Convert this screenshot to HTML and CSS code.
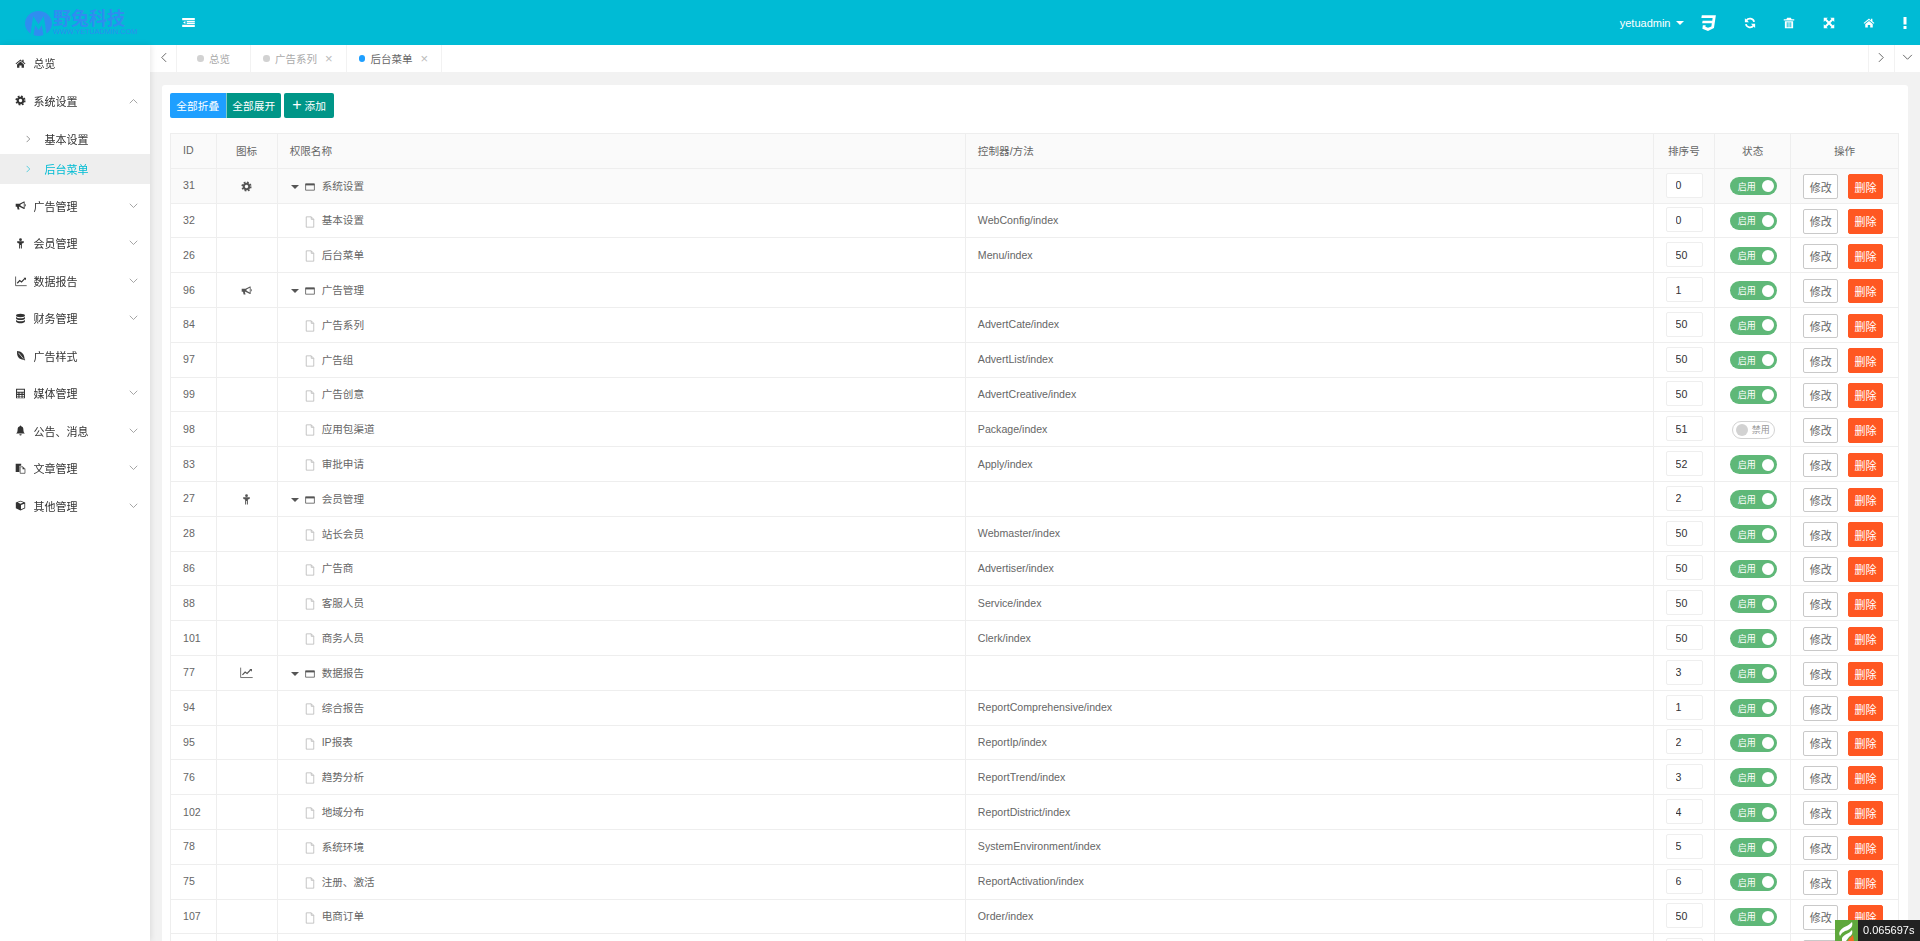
FILE: index.html
```html
<!DOCTYPE html>
<html lang="zh-CN">
<head>
<meta charset="utf-8">
<title>后台菜单</title>
<link rel="stylesheet" href="styles.css">
</head>
<body>
<svg class="sprite" aria-hidden="true">
  <symbol id="i-home" viewBox="0 0 16 16"><path d="M8 2 .8 8l.9 1.1L8 3.9l6.3 5.2.9-1.1-2.7-2.2V2.4h-2v2.2z"/><path d="M3 9.4 8 5.2l5 4.2V14H9.6v-3.2H6.4V14H3z"/></symbol>
  <symbol id="i-gear" viewBox="0 0 16 16"><circle cx="8" cy="8" r="4" fill="none" stroke="currentColor" stroke-width="3"/><circle cx="8" cy="8" r="6.2" fill="none" stroke="currentColor" stroke-width="2.4" stroke-dasharray="2.6 2.27"/></symbol>
  <symbol id="i-horn" viewBox="0 0 16 16"><path fill-rule="evenodd" d="M1 5.5h5.5L13 2h1v11h-1L6.5 9.7H5.6l1 4H3.800l-.9-4H1zM12.800 3.900 8 6.400v2l4.800 2.600z"/><path d="M14.600 6h1v3h-1z"/></symbol>
  <symbol id="i-male" viewBox="0 0 16 16"><circle cx="8" cy="2.400" r="2"/><path d="M3 4.800h10l-.5 2.400-2.500.7V15.200H8.600v-5H7.400v5H6V7.900l-2.500-.7z"/></symbol>
  <symbol id="i-chart" viewBox="0 0 16 16"><path d="M.8 2v12.200H15.600" fill="none" stroke="currentColor"/><path d="M3 11l3.300-3.600 2.400 1.800 4.600-4.700" fill="none" stroke="currentColor" stroke-width="1.500"/><path d="M11.500 3.800h3.200v3.200z"/></symbol>
  <symbol id="i-db" viewBox="0 0 16 16"><ellipse cx="8" cy="3.500" rx="6.500" ry="2.500"/><path d="M1.500 5.300c1 1.500 3.500 2.200 6.500 2.200s5.500-.7 6.500-2.200v2.700C14 9.500 11 10.200 8 10.200S2 9.500 1.500 8z"/><path d="M1.500 9.700c1 1.500 3.500 2.200 6.500 2.200s5.500-.7 6.500-2.200v2.700C14 14 11 15 8 15s-6-1-6.500-2.600z"/></symbol>
  <symbol id="i-leaf" viewBox="0 0 16 16"><path d="M3 1.500C9 1.500 14 6 14 13.500l1 1-.8.8-1.200-1.200C7 14.500 2 10 3 1.500z"/><path d="M5 4l7 8.500" stroke="#fff" fill="none"/></symbol>
  <symbol id="i-calc" viewBox="0 0 16 16"><path fill-rule="evenodd" d="M1.500 1h13v14h-13zM3 2.500v3h10v-3zM3 7v1.500h2V7zm3.500 0v1.500h3V7zM11 7v1.500h2V7zM3 10v1.500h2V10zm3.500 0v1.500h3V10zM11 10v1.500h2V10zM3 12.500V14h2v-1.500zm3.500 0V14h3v-1.500zm4.500 0V14h2v-1.500z"/></symbol>
  <symbol id="i-bell" viewBox="0 0 16 16"><path d="M8 .8c.6 0 1 .4 1 1 2 .4 3.200 2.200 3.200 4.700 0 3.500 1 4.700 2.300 6H1.500c1.300-1.300 2.300-2.500 2.300-6C3.800 4 5 2.200 7 1.800c0-.6.400-1 1-1z"/><path d="M6.300 13.500h3.400A1.700 1.700 0 0 1 6.300 13.500z"/></symbol>
  <symbol id="i-files" viewBox="0 0 16 16"><path d="M1 1h8v3H6.500v9H1z"/><path d="M7.500 5.500h4l3 3V15h-7z" fill="#fff" stroke="currentColor"/><path d="M11 5.500V9h3.500z"/></symbol>
  <symbol id="i-cube" viewBox="0 0 16 16"><path d="M8 1l6.800 2.800v8.200L8 15.200 1.200 12V3.800z"/><path d="M8.700 7.400 13.600 5.300v6l-4.900 2.300zM4 3.700 8 2.100l4 1.600-4 1.700z" fill="#fff"/></symbol>
  <symbol id="i-page" viewBox="0 0 12 14"><path d="M1.500.800h6l3 3v9.400h-9z M7.500.800v3h3" fill="none" stroke="currentColor" stroke-linejoin="round"/></symbol>
  <symbol id="i-win" viewBox="0 0 12 10"><path d="M.500 1h11v8H.500z" fill="none" stroke="currentColor"/><path d="M.500 1h11v2h-11z"/></symbol>
  <symbol id="i-down" viewBox="0 0 12 8"><path d="M1 1l5 5 5-5" fill="none" stroke="currentColor"/></symbol>
  <symbol id="i-up" viewBox="0 0 12 8"><path d="M1 7l5-5 5 5" fill="none" stroke="currentColor"/></symbol>
  <symbol id="i-right" viewBox="0 0 8 12"><path d="M1 1l5 5-5 5" fill="none" stroke="currentColor"/></symbol>
  <symbol id="i-left" viewBox="0 0 8 12"><path d="M7 1 2 6l5 5" fill="none" stroke="currentColor"/></symbol>
  <symbol id="i-indent" viewBox="0 0 14 10"><path d="M0 0h14v2.600H0zM5 3.300h9v1.400H5zM5 5.400h9v1.400H5zM0 7.500h14V10H0z"/><path d="M3.500 3.300v3.500L1 5z"/></symbol>
  <symbol id="i-css" viewBox="0 0 16 16"><path d="M2.500 1H15l-1.700 11.500L8 15l-5-2 .4-3h2.500l-.2 1.300L8 12.200l3-1 .4-3H2.800l.4-2.300h8.600l.3-2.300H2.100z"/></symbol>
  <symbol id="i-refresh" viewBox="0 0 16 16"><path d="M13.500 6.500A5.800 5.800 0 0 0 3.200 4.600" fill="none" stroke="currentColor" stroke-width="2.400"/><path d="M1.200 1.500v5.500h5.500z"/><path d="M2.500 9.500a5.800 5.800 0 0 0 10.300 1.900" fill="none" stroke="currentColor" stroke-width="2.400"/><path d="M14.800 14.500V9H9.300z"/></symbol>
  <symbol id="i-trash" viewBox="0 0 16 16"><path d="M5.500 1h5l1 2H15v1.500H1V3h3.500z"/><path fill-rule="evenodd" d="M2.500 5.500h11V15h-11zM5 7v6.500h1.200V7zm2.400 0v6.500h1.200V7zm2.400 0v6.500H11V7z"/></symbol>
  <symbol id="i-expand" viewBox="0 0 16 16"><path d="M1 1h5.500L4.700 2.800 8 6.100l3.300-3.300L9.500 1H15v5.500l-1.800-1.800L9.900 8l3.300 3.300 1.800-1.800V15H9.500l1.800-1.800L8 9.900l-3.300 3.300L6.500 15H1V9.500l1.800 1.800L6.100 8 2.800 4.700 1 6.500z"/></symbol>
  <symbol id="i-more" viewBox="0 0 4 12"><path d="M.500 0h3v7.500h-3zM.500 9h3v3h-3z"/></symbol>
</svg>

<div class="app">
  <header class="topbar">
    <a class="logo">
      <svg class="logo-mark" viewBox="0 0 28 26"><ellipse cx="14" cy="13" rx="14" ry="13"/><path d="M7 26 9.500 10l4.500 7 4.500-7L21 26" /></svg>
      <span class="logo-words"><b>野兔科技</b><small>WWW.YETUADMIN.COM</small></span>
    </a>
    <svg class="toggle"><use href="#i-indent"/></svg>
    <div class="top-tools">
      <span class="user">yetuadmin<i class="caret"></i></span>
      <svg class="tool tool-css"><use href="#i-css"/></svg>
      <svg class="tool"><use href="#i-refresh"/></svg>
      <svg class="tool"><use href="#i-trash"/></svg>
      <svg class="tool tool-wide"><use href="#i-expand"/></svg>
      <svg class="tool tool-wide"><use href="#i-home"/></svg>
      <svg class="tool tool-wide tool-more"><use href="#i-more"/></svg>
    </div>
  </header>

  <div class="body">
    <nav class="side">
      <a class="nav"><svg class="nav-ic"><use href="#i-home"/></svg>总览</a>
      <a class="nav"><svg class="nav-ic"><use href="#i-gear"/></svg>系统设置<svg class="nav-arrow"><use href="#i-up"/></svg></a>
      <div class="sub">
        <a class="sub-item"><svg class="sub-arrow"><use href="#i-right"/></svg>基本设置</a>
        <a class="sub-item is-active"><svg class="sub-arrow"><use href="#i-right"/></svg>后台菜单</a>
      </div>
      <a class="nav"><svg class="nav-ic"><use href="#i-horn"/></svg>广告管理<svg class="nav-arrow"><use href="#i-down"/></svg></a>
      <a class="nav"><svg class="nav-ic"><use href="#i-male"/></svg>会员管理<svg class="nav-arrow"><use href="#i-down"/></svg></a>
      <a class="nav"><svg class="nav-ic nav-ic-lg"><use href="#i-chart"/></svg>数据报告<svg class="nav-arrow"><use href="#i-down"/></svg></a>
      <a class="nav"><svg class="nav-ic"><use href="#i-db"/></svg>财务管理<svg class="nav-arrow"><use href="#i-down"/></svg></a>
      <a class="nav"><svg class="nav-ic"><use href="#i-leaf"/></svg>广告样式</a>
      <a class="nav"><svg class="nav-ic"><use href="#i-calc"/></svg>媒体管理<svg class="nav-arrow"><use href="#i-down"/></svg></a>
      <a class="nav"><svg class="nav-ic"><use href="#i-bell"/></svg>公告、消息<svg class="nav-arrow"><use href="#i-down"/></svg></a>
      <a class="nav"><svg class="nav-ic"><use href="#i-files"/></svg>文章管理<svg class="nav-arrow"><use href="#i-down"/></svg></a>
      <a class="nav"><svg class="nav-ic"><use href="#i-cube"/></svg>其他管理<svg class="nav-arrow"><use href="#i-down"/></svg></a>
    </nav>

    <main class="main">
      <div class="tabs">
        <span class="tab-btn"><svg class="tab-chev"><use href="#i-left"/></svg></span>
        <span class="tab tab-home"><i class="dot"></i>总览</span>
        <span class="tab"><i class="dot"></i>广告系列<em class="close">×</em></span>
        <span class="tab is-current"><i class="dot"></i>后台菜单<em class="close">×</em></span>
        <span class="tab-space"></span>
        <span class="tab-btn tab-btn-r"><svg class="tab-chev"><use href="#i-right"/></svg></span>
        <span class="tab-btn tab-btn-r"><svg class="tab-chev-d"><use href="#i-down"/></svg></span>
      </div>
      <div class="scroller">
        <section class="card">
          <div class="actions">
            <button class="btn btn-blue">全部折叠</button><button class="btn btn-green btn-joined">全部展开</button><button class="btn btn-green btn-add"><span class="plus">+</span> 添加</button>
          </div>
          <table class="grid">
            <colgroup>
              <col class="c-id"><col class="c-icon"><col class="c-name"><col class="c-ctrl"><col class="c-sort"><col class="c-state"><col class="c-ops">
            </colgroup>
            <thead>
              <tr><th>ID</th><th class="center">图标</th><th>权限名称</th><th>控制器/方法</th><th class="center">排序号</th><th class="center">状态</th><th class="center">操作</th></tr>
            </thead>
            <tbody>
              <tr class="tint"><td>31</td><td class="center"><svg class="row-ic"><use href="#i-gear"/></svg></td><td class="tree"><i class="tree-caret"></i><svg class="ic-win"><use href="#i-win"/></svg>系统设置</td><td></td><td><input class="sort" value="0"></td><td><span class="sw on">启用<i></i></span></td><td class="ops"><button class="op">修改</button><button class="op op-del">删除</button></td></tr>
              <tr><td>32</td><td></td><td class="tree leaf"><svg class="ic-page"><use href="#i-page"/></svg>基本设置</td><td>WebConfig/index</td><td><input class="sort" value="0"></td><td><span class="sw on">启用<i></i></span></td><td class="ops"><button class="op">修改</button><button class="op op-del">删除</button></td></tr>
              <tr><td>26</td><td></td><td class="tree leaf"><svg class="ic-page"><use href="#i-page"/></svg>后台菜单</td><td>Menu/index</td><td><input class="sort" value="50"></td><td><span class="sw on">启用<i></i></span></td><td class="ops"><button class="op">修改</button><button class="op op-del">删除</button></td></tr>
              <tr><td>96</td><td class="center"><svg class="row-ic"><use href="#i-horn"/></svg></td><td class="tree"><i class="tree-caret"></i><svg class="ic-win"><use href="#i-win"/></svg>广告管理</td><td></td><td><input class="sort" value="1"></td><td><span class="sw on">启用<i></i></span></td><td class="ops"><button class="op">修改</button><button class="op op-del">删除</button></td></tr>
              <tr><td>84</td><td></td><td class="tree leaf"><svg class="ic-page"><use href="#i-page"/></svg>广告系列</td><td>AdvertCate/index</td><td><input class="sort" value="50"></td><td><span class="sw on">启用<i></i></span></td><td class="ops"><button class="op">修改</button><button class="op op-del">删除</button></td></tr>
              <tr><td>97</td><td></td><td class="tree leaf"><svg class="ic-page"><use href="#i-page"/></svg>广告组</td><td>AdvertList/index</td><td><input class="sort" value="50"></td><td><span class="sw on">启用<i></i></span></td><td class="ops"><button class="op">修改</button><button class="op op-del">删除</button></td></tr>
              <tr><td>99</td><td></td><td class="tree leaf"><svg class="ic-page"><use href="#i-page"/></svg>广告创意</td><td>AdvertCreative/index</td><td><input class="sort" value="50"></td><td><span class="sw on">启用<i></i></span></td><td class="ops"><button class="op">修改</button><button class="op op-del">删除</button></td></tr>
              <tr><td>98</td><td></td><td class="tree leaf"><svg class="ic-page"><use href="#i-page"/></svg>应用包渠道</td><td>Package/index</td><td><input class="sort" value="51"></td><td><span class="sw off"><i></i>禁用</span></td><td class="ops"><button class="op">修改</button><button class="op op-del">删除</button></td></tr>
              <tr><td>83</td><td></td><td class="tree leaf"><svg class="ic-page"><use href="#i-page"/></svg>审批申请</td><td>Apply/index</td><td><input class="sort" value="52"></td><td><span class="sw on">启用<i></i></span></td><td class="ops"><button class="op">修改</button><button class="op op-del">删除</button></td></tr>
              <tr><td>27</td><td class="center"><svg class="row-ic"><use href="#i-male"/></svg></td><td class="tree"><i class="tree-caret"></i><svg class="ic-win"><use href="#i-win"/></svg>会员管理</td><td></td><td><input class="sort" value="2"></td><td><span class="sw on">启用<i></i></span></td><td class="ops"><button class="op">修改</button><button class="op op-del">删除</button></td></tr>
              <tr><td>28</td><td></td><td class="tree leaf"><svg class="ic-page"><use href="#i-page"/></svg>站长会员</td><td>Webmaster/index</td><td><input class="sort" value="50"></td><td><span class="sw on">启用<i></i></span></td><td class="ops"><button class="op">修改</button><button class="op op-del">删除</button></td></tr>
              <tr><td>86</td><td></td><td class="tree leaf"><svg class="ic-page"><use href="#i-page"/></svg>广告商</td><td>Advertiser/index</td><td><input class="sort" value="50"></td><td><span class="sw on">启用<i></i></span></td><td class="ops"><button class="op">修改</button><button class="op op-del">删除</button></td></tr>
              <tr><td>88</td><td></td><td class="tree leaf"><svg class="ic-page"><use href="#i-page"/></svg>客服人员</td><td>Service/index</td><td><input class="sort" value="50"></td><td><span class="sw on">启用<i></i></span></td><td class="ops"><button class="op">修改</button><button class="op op-del">删除</button></td></tr>
              <tr><td>101</td><td></td><td class="tree leaf"><svg class="ic-page"><use href="#i-page"/></svg>商务人员</td><td>Clerk/index</td><td><input class="sort" value="50"></td><td><span class="sw on">启用<i></i></span></td><td class="ops"><button class="op">修改</button><button class="op op-del">删除</button></td></tr>
              <tr><td>77</td><td class="center"><svg class="row-ic row-ic-lg"><use href="#i-chart"/></svg></td><td class="tree"><i class="tree-caret"></i><svg class="ic-win"><use href="#i-win"/></svg>数据报告</td><td></td><td><input class="sort" value="3"></td><td><span class="sw on">启用<i></i></span></td><td class="ops"><button class="op">修改</button><button class="op op-del">删除</button></td></tr>
              <tr><td>94</td><td></td><td class="tree leaf"><svg class="ic-page"><use href="#i-page"/></svg>综合报告</td><td>ReportComprehensive/index</td><td><input class="sort" value="1"></td><td><span class="sw on">启用<i></i></span></td><td class="ops"><button class="op">修改</button><button class="op op-del">删除</button></td></tr>
              <tr><td>95</td><td></td><td class="tree leaf"><svg class="ic-page"><use href="#i-page"/></svg>IP报表</td><td>ReportIp/index</td><td><input class="sort" value="2"></td><td><span class="sw on">启用<i></i></span></td><td class="ops"><button class="op">修改</button><button class="op op-del">删除</button></td></tr>
              <tr><td>76</td><td></td><td class="tree leaf"><svg class="ic-page"><use href="#i-page"/></svg>趋势分析</td><td>ReportTrend/index</td><td><input class="sort" value="3"></td><td><span class="sw on">启用<i></i></span></td><td class="ops"><button class="op">修改</button><button class="op op-del">删除</button></td></tr>
              <tr><td>102</td><td></td><td class="tree leaf"><svg class="ic-page"><use href="#i-page"/></svg>地域分布</td><td>ReportDistrict/index</td><td><input class="sort" value="4"></td><td><span class="sw on">启用<i></i></span></td><td class="ops"><button class="op">修改</button><button class="op op-del">删除</button></td></tr>
              <tr><td>78</td><td></td><td class="tree leaf"><svg class="ic-page"><use href="#i-page"/></svg>系统环境</td><td>SystemEnvironment/index</td><td><input class="sort" value="5"></td><td><span class="sw on">启用<i></i></span></td><td class="ops"><button class="op">修改</button><button class="op op-del">删除</button></td></tr>
              <tr><td>75</td><td></td><td class="tree leaf"><svg class="ic-page"><use href="#i-page"/></svg>注册、激活</td><td>ReportActivation/index</td><td><input class="sort" value="6"></td><td><span class="sw on">启用<i></i></span></td><td class="ops"><button class="op">修改</button><button class="op op-del">删除</button></td></tr>
              <tr><td>107</td><td></td><td class="tree leaf"><svg class="ic-page"><use href="#i-page"/></svg>电商订单</td><td>Order/index</td><td><input class="sort" value="50"></td><td><span class="sw on">启用<i></i></span></td><td class="ops"><button class="op">修改</button><button class="op op-del">删除</button></td></tr>
              <tr><td></td><td></td><td></td><td></td><td><input class="sort" value=""></td><td></td><td class="ops"><button class="op" aria-label="修改"></button><button class="op op-del" aria-label="删除"></button></td></tr>
            </tbody>
          </table>
        </section>
      </div>
    </main>
  </div>
</div>

<div class="trace">
  <svg class="trace-logo" viewBox="0 0 23 21"><path fill="#5fa83c" d="M0 0h23v21H0z"/><path fill="#fff" d="M5 11c3-5 8-4 12-9 1 3 0 6-4 8-3 1-6 2-8 6-1-2-1-3 0-5z"/><path fill="#fff" d="M7 18c2-4 7-4 10-8 1 3 0 5-3 7l-3 4H7z"/><path fill="#f26a21" d="M14 19l4-4 1 6h-6z"/></svg>
  <span class="trace-time">0.065697s</span>
</div>
</body>
</html>
```
FILE: styles.css
```css
* { box-sizing: border-box; }
html, body { margin: 0; height: 100%; overflow: hidden; }
body {
  font-family: "Liberation Sans", "Noto Sans CJK SC", sans-serif;
  font-size: 10.6px;
  color: #666;
  background: #f2f2f2;
}
.sprite { display: none; }
svg { fill: currentColor; display: block; flex: none; }

/* the reference is a resampled capture, so everything is very slightly soft */
.app, .trace { filter: blur(.3px); }
.app { display: flex; flex-direction: column; height: 100vh; }

/* top bar */
.topbar {
  flex: none;
  height: 45px;
  background: #00bbd5;
  color: #fff;
  display: flex;
  align-items: center;
}
.logo { width: 182px; padding: 2px 0 0 25px; display: flex; align-items: center; gap: 1px; color: #2f8df0; }
.logo-mark { width: 27px; height: 25px; margin-top: -1px; }
.logo-mark path { fill: none; stroke: #00bbd5; stroke-width: 3.4; }
.logo-words { display: flex; flex-direction: column; }
.logo-words b { font-size: 18px; line-height: 16px; font-weight: 700; }
.logo-words small { font-size: 7.300px; line-height: 9px; white-space: nowrap; }
.toggle { width: 13px; height: 9px; }
.top-tools { margin-left: auto; display: flex; align-items: center; padding-right: 13.500px; }
.user { display: flex; align-items: center; font-size: 11px; }
.caret { margin-left: 5px; margin-top: 1px; border: 4px solid transparent; border-top-color: #fff; border-bottom: 0; }
.tool { width: 12px; height: 12px; margin-left: 26.500px; }
.tool-css { width: 18px; height: 18px; margin-left: 15.500px; margin-right: .500px; }
.tool-wide { margin-left: 28px; }
.tool-more { width: 4px; }

/* layout */
.body { flex: 1; min-height: 0; display: flex; }
.side {
  flex: none;
  width: 150px;
  background: #fff;
  color: #333;
  font-size: 11px;
  box-shadow: 1px 0 6px rgba(0, 0, 0, .1);
  position: relative;
  z-index: 2;
}
.nav { height: 37.500px; display: flex; align-items: center; padding: 0 0 1.500px 15px; }
.nav-ic { width: 11px; height: 11px; margin-right: 7.500px; }
.nav-ic-lg { width: 12px; height: 12px; margin-right: 6.500px; }
.nav-arrow { width: 9px; height: 6px; margin-left: auto; margin-right: 12px; color: #888; }
.sub { padding: 4px 0 3.500px; }
.sub-item { height: 30px; display: flex; align-items: center; padding: 0 0 1px 26px; }
.sub-arrow { width: 5px; height: 8px; margin-right: 13.500px; color: #555; }
.sub-item.is-active { background: #eee; color: #00bcd4; }
.sub-item.is-active .sub-arrow { color: #00bcd4; }

.main { flex: 1; min-width: 0; display: flex; flex-direction: column; }

/* tabs */
.tabs { flex: none; height: 27px; margin-bottom: 1px; background: #fff; display: flex; align-items: stretch; color: #aaa; font-size: 10.500px; }
.tab-btn { width: 27px; display: flex; align-items: center; justify-content: center; border-right: 1px solid #f2f2f2; color: #555; }
.tab-btn-r { border-right: 0; border-left: 1px solid #f2f2f2; width: 26px; }
.tab-chev { width: 7px; height: 11px; margin-top: -2px; }
.tab-chev-d { width: 11px; height: 7px; margin-top: -2px; }
.tab { display: flex; align-items: center; padding: 0 13px 0 12px; border-right: 1px solid #f2f2f2; }
.tab-home { padding: 0 20px; }
.tab-space { flex: 1; }
.dot { width: 6.500px; height: 6.500px; border-radius: 50%; background: #d2d2d2; margin-right: 5.500px; }
.close { font-style: normal; margin-left: 8px; font-size: 13px; color: #bbb; }
.is-current { color: #666; }
.is-current .dot { background: #1e9fff; }

/* content */
.scroller { flex: 1; min-height: 0; overflow-y: scroll; padding: 12px; }
.scroller::-webkit-scrollbar { width: 4px; }
.scroller::-webkit-scrollbar-track { background: #fafafa; }
.scroller::-webkit-scrollbar-thumb { background: #999; }
.card { background: #fff; border-radius: 3px; padding: 8px 9px 8px 8px; min-height: 1696px; }
.actions { display: flex; height: 25px; margin-bottom: 15px; }
.btn { border: 0; height: 25px; padding: 0; color: #fff; font: inherit; font-size: 10.700px; border-radius: 2px; }
.btn-blue { width: 55.500px; background: #1e9fff; border-radius: 2px 0 0 2px; }
.btn-green { background: #009688; }
.btn-joined { width: 55.500px; border-left: 1px solid rgba(255, 255, 255, .5); border-radius: 0 2px 2px 0; }
.btn-add { width: 50px; margin-left: 3px; }
.plus { font-size: 16px; line-height: 10px; }

/* table */
.grid { width: 100%; border-collapse: collapse; table-layout: fixed; }
.c-id { width: 45.500px; }
.c-icon { width: 61px; }
.c-name { width: 687px; }
.c-ctrl { width: 686.500px; }
.c-sort { width: 61.500px; }
.c-state { width: 76px; }
.c-ops { width: 107.500px; }
.grid th, .grid td { height: 34.800px; padding: 0 0 1px 12px; border: 1px solid #eee; font-weight: 400; text-align: left; color: #666; }
.grid th { background: #fafafa; }
.grid .center { text-align: center; padding-left: 0; }
.tint td { background: #fafafa; }
.row-ic { width: 11px; height: 11px; display: inline-block; vertical-align: middle; color: #555; }
.row-ic-lg { width: 13px; height: 13px; }
.grid .tree { padding-left: 13px; }
.tree-caret { display: inline-block; vertical-align: middle; width: 0; height: 0; border: 4px solid transparent; border-top-color: #555; border-bottom: 0; margin-right: 6px; }
.ic-win { display: inline-block; vertical-align: middle; width: 10px; height: 8px; margin-right: 7px; color: #555; }
.grid .leaf { padding-left: 27px; }
.ic-page { display: inline-block; vertical-align: middle; width: 10px; height: 12px; margin-right: 7px; color: #bbb; }

.sort { display: block; width: 37.500px; height: 25px; border: 1px solid #eee; border-radius: 2px; background: #fff; padding: 0 0 0 9px; font: inherit; color: #333; outline: 0; }

.sw { display: flex; align-items: center; height: 18.500px; border-radius: 10px; font-size: 9px; margin-top: 2px; }
.sw i { width: 12px; height: 12px; border-radius: 50%; }
.on { width: 47px; margin-left: 2.500px; background: #5fb878; color: #fff; padding: 0 3px 0 8px; justify-content: space-between; }
.on i { background: #fff; }
.off { width: 43px; margin-left: 4.500px; background: #fff; border: 1px solid #d2d2d2; color: #999; padding: 0 4px 0 3px; justify-content: space-between; }
.off i { background: #d2d2d2; }

.ops { white-space: nowrap; }
.grid .ops { padding-top: 2px; padding-bottom: 0; }
.op { width: 34.800px; height: 24.500px; padding: 0; border: 1px solid #c9c9c9; border-radius: 2px; background: #fff; color: #666; font: inherit; font-size: 11px; vertical-align: middle; }
.op-del { margin-left: 10px; background: #ff5722; border-color: #ff5722; color: #fff; }

/* debug badge */
.trace { position: fixed; right: 0; bottom: 0; z-index: 5; display: flex; height: 21px; }
.trace-logo { width: 23px; height: 21px; }
.trace-time { width: 62px; background: #222; color: #fff; font-size: 11px; line-height: 21px; padding-left: 5px; }
```
